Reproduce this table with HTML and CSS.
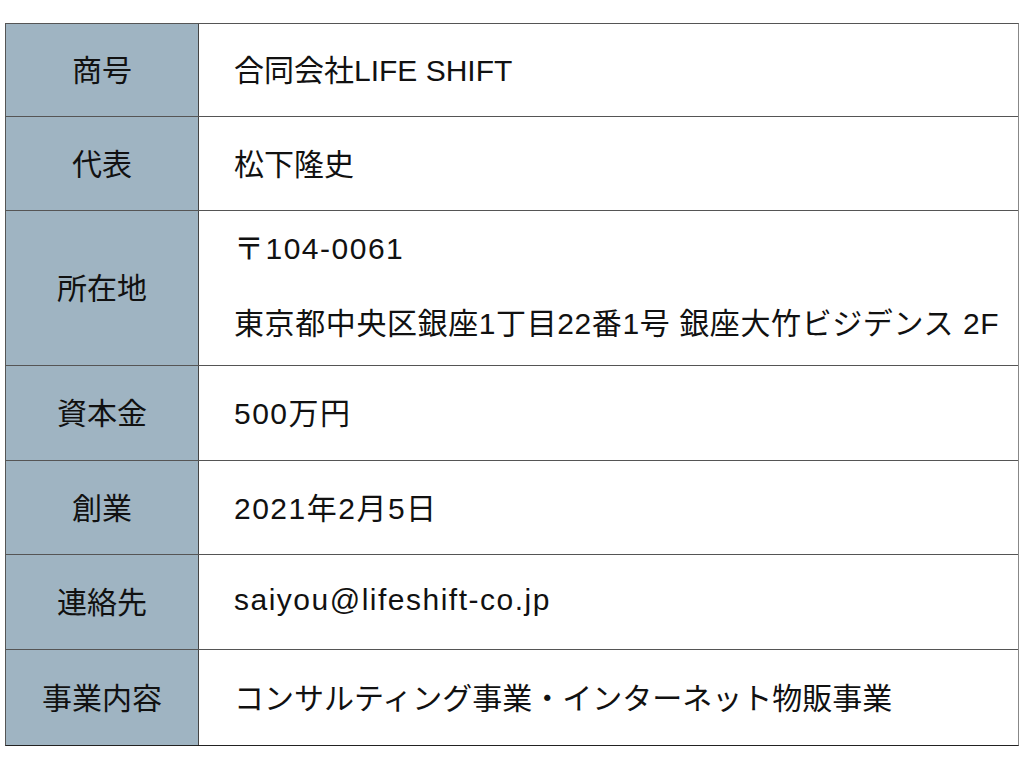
FILE: index.html
```html
<!DOCTYPE html>
<html lang="ja">
<head>
<meta charset="utf-8">
<title>会社概要</title>
<link rel="stylesheet" href="styles.css">
</head>
<body>
<div class="company">
  <div class="row r1"><div class="head">商号</div><div class="value">合同会社LIFE SHIFT</div></div>
  <div class="row r2"><div class="head">代表</div><div class="value">松下隆史</div></div>
  <div class="row r3"><div class="head">所在地</div><div class="value multi"><p class="wide">〒104-0061</p><p class="addr">東京都中央区銀座1丁目22番1号 銀座大竹ビジデンス 2F</p></div></div>
  <div class="row r4"><div class="head">資本金</div><div class="value wide">500万円</div></div>
  <div class="row r5"><div class="head">創業</div><div class="value wide">2021年2月5日</div></div>
  <div class="row r6"><div class="head">連絡先</div><div class="value wide">saiyou@lifeshift-co.jp</div></div>
  <div class="row r7"><div class="head">事業内容</div><div class="value">コンサルティング事業・インターネット物販事業</div></div>
</div>
</body>
</html>
```
FILE: styles.css
```css
html, body {
  margin: 0;
  padding: 0;
  background: #ffffff;
}
body {
  padding: 23px 0 0 5px;
  font-family: "Liberation Sans", "Noto Sans CJK JP", sans-serif;
  font-size: 30px;
  color: #111;
}
.company {
  width: 1014px;
  border-top: 1px solid #555;
  border-left: 1px solid #555;
  border-right: 1px solid #888;
  border-bottom: 1px solid #222;
  box-sizing: border-box;
}
.row {
  display: grid;
  grid-template-columns: 193px 1fr;
  border-top: 1px solid #555;
}
.row:first-child { border-top: none; }
.r1 { height: 92px; }
.r2 { height: 93px; }
.r3 { height: 154px; }
.r4 { height: 94px; }
.r5 { height: 93px; }
.r6 { height: 94px; }
.r7 { height: 95px; }
.head {
  background: #9fb4c2;
  border-right: 1px solid #444;
  display: flex;
  align-items: center;
  justify-content: center;
  padding-bottom: 4px;
}
.value {
  display: flex;
  align-items: center;
  padding-left: 35px;
  padding-bottom: 4px;
}
.value.multi {
  flex-direction: column;
  align-items: flex-start;
  justify-content: center;
  gap: 40px;
}
.value p { margin: 0; line-height: 35px; }
.wide { letter-spacing: 0.05em; }
.addr { letter-spacing: 0.02em; }
```
